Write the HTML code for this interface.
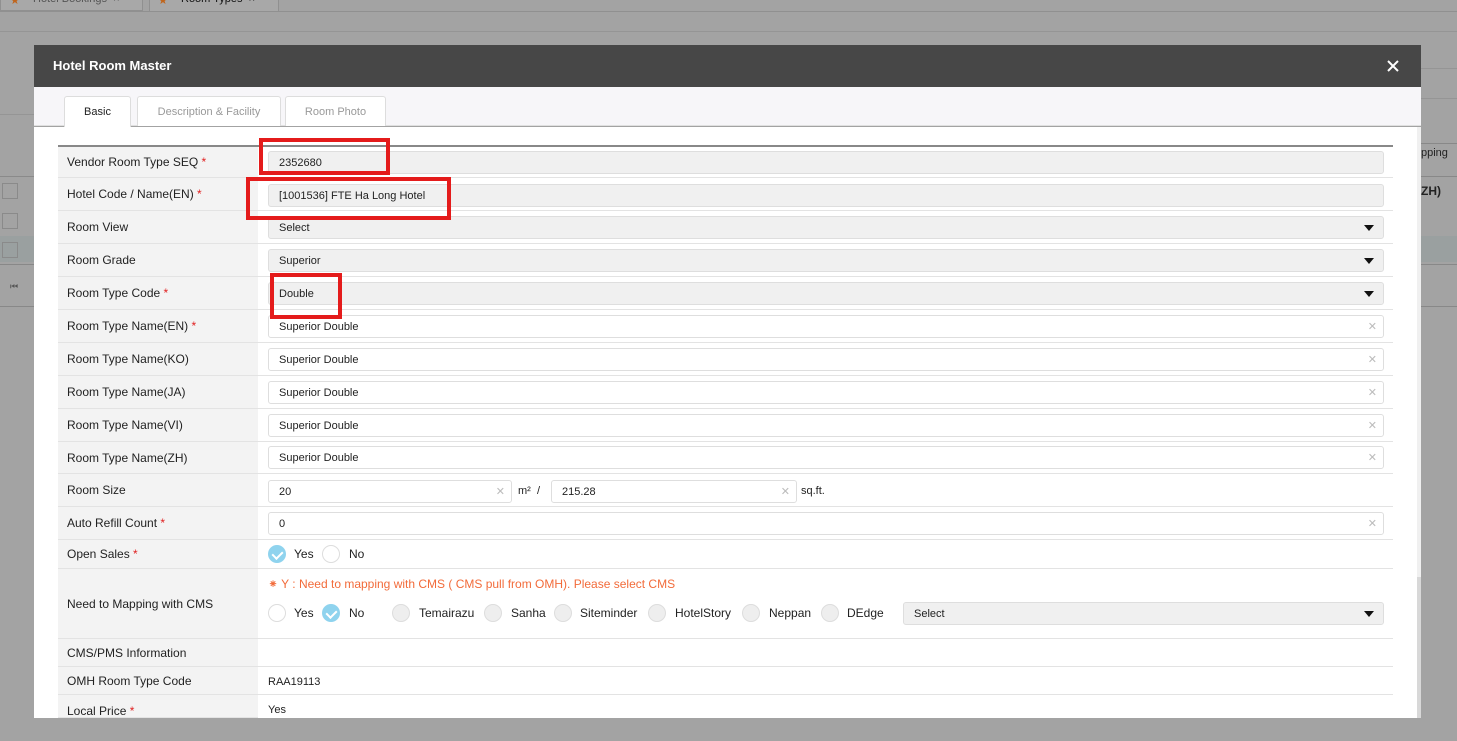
<!DOCTYPE html>
<html><head><meta charset="utf-8"><style>
*{box-sizing:border-box;margin:0;padding:0}
body{width:1457px;height:741px;overflow:hidden;background:#a3a3a3;font-family:"Liberation Sans",Arial,sans-serif;position:relative;font-size:12px;color:#222}
.a{position:absolute}
.lbl{position:absolute;left:58px;width:200px;background:#f3f3f3;border-bottom:1px solid #e3e3e3;font-size:12px;color:#222;padding-left:9px;display:flex;align-items:center}
.val{position:absolute;left:258px;width:1135px;border-bottom:1px solid #e3e3e3;background:#fff}
.inp{position:absolute;height:23px;border:1px solid #dedede;border-radius:3px;background:#fff;font-size:11px;padding-left:10px;line-height:23px;color:#222}
.ro{background:#f0f0f0}
.x{position:absolute;right:6px;top:0;color:#bbb;font-size:11px;line-height:22px}
.arr{position:absolute;right:9px;top:8px;width:0;height:0;border-left:5px solid transparent;border-right:5px solid transparent;border-top:6px solid #111}
.req{color:#e02020}
.rad{position:absolute;width:18px;height:18px;border-radius:50%;border:1px solid #ddd;background:#fff}
.rad.g{background:#eee}
.rad.c{background:#8fd3ee;border-color:#8fd3ee}
.rad.c:after{content:"";position:absolute;left:5px;top:3px;width:5px;height:8px;border:solid #fff;border-width:0 2px 2px 0;transform:rotate(45deg)}
.t{position:absolute;font-size:12px;color:#222}
.red{position:absolute;border:4px solid #e41b1b}
</style></head><body>
<div class="a" style="left:0;top:0;width:143px;height:11px;border:1px solid #909090;border-top:none;background:#a8a8a8"></div>
<div class="a" style="left:10px;top:-6px;font-size:11px;color:#c0651c">★</div>
<div class="a" style="left:33px;top:-7px;font-size:11px;color:#555">Hotel Bookings &nbsp;×</div>
<div class="a" style="left:149px;top:0;width:130px;height:12px;border:1px solid #909090;border-top:none;background:#a8a8a8"></div>
<div class="a" style="left:158px;top:-6px;font-size:11px;color:#c0651c">★</div>
<div class="a" style="left:181px;top:-7px;font-size:11px;color:#111">Room Types &nbsp;×</div>
<div class="a" style="left:0;top:11px;width:1457px;height:1px;background:#909090"></div>
<div class="a" style="left:0;top:31px;width:1457px;height:1px;background:#959595"></div>
<div class="a" style="left:0;top:114px;width:34px;height:1px;background:#959595"></div>
<div class="a" style="left:0;top:176px;width:34px;height:1px;background:#8a8a8a"></div>
<div class="a" style="left:0;top:236px;width:34px;height:26px;background:#9aa0a0"></div>
<div class="a" style="left:0;top:264px;width:34px;height:1px;background:#888"></div>
<div class="a" style="left:0;top:306px;width:34px;height:1px;background:#888"></div>
<div class="a" style="left:2px;top:183px;width:16px;height:16px;border:1px solid #8a8a8a"></div>
<div class="a" style="left:2px;top:213px;width:16px;height:16px;border:1px solid #8a8a8a"></div>
<div class="a" style="left:2px;top:242px;width:16px;height:16px;border:1px solid #8a8a8a"></div>
<div class="a" style="left:10px;top:281px;font-size:9px;color:#555">⏮</div>
<div class="a" style="left:1421px;top:68px;width:36px;height:1px;background:#959595"></div>
<div class="a" style="left:1421px;top:98px;width:36px;height:1px;background:#959595"></div>
<div class="a" style="left:1421px;top:143px;width:36px;height:1px;background:#888"></div>
<div class="a" style="left:1421px;top:147px;font-size:11px;color:#222">pping</div>
<div class="a" style="left:1421px;top:176px;width:36px;height:1px;background:#888"></div>
<div class="a" style="left:1421px;top:184px;font-size:12px;font-weight:bold;color:#222">ZH)</div>
<div class="a" style="left:1421px;top:236px;width:36px;height:26px;background:#9aa0a0"></div>
<div class="a" style="left:1421px;top:264px;width:36px;height:1px;background:#888"></div>
<div class="a" style="left:1421px;top:306px;width:36px;height:1px;background:#888"></div>

<div class="a" style="left:34px;top:45px;width:1387px;height:42px;background:#474747"></div>
<div class="a" style="left:53px;top:58px;color:#fff;font-weight:bold;font-size:13px">Hotel Room Master</div>
<svg class="a" style="left:1387px;top:60px" width="12" height="12" viewBox="0 0 12 12"><path d="M1 1L11 11M11 1L1 11" stroke="#fff" stroke-width="2"/></svg>
<div class="a" style="left:34px;top:87px;width:1387px;height:39px;background:#f7f6f9;border-bottom:1px solid #e0e0e0"></div>
<div class="a" style="left:64px;top:96px;width:67px;height:31px;background:#fff;border:1px solid #ddd;border-bottom:none;border-radius:3px 3px 0 0;text-align:center;line-height:30px;font-size:11px;color:#222">Basic</div>
<div class="a" style="left:137px;top:96px;width:144px;height:30px;background:#fff;border:1px solid #ddd;border-bottom:none;border-radius:3px 3px 0 0;text-align:center;line-height:30px;font-size:11px;color:#999">Description &amp; Facility</div>
<div class="a" style="left:285px;top:96px;width:101px;height:30px;background:#fff;border:1px solid #ddd;border-bottom:none;border-radius:3px 3px 0 0;text-align:center;line-height:30px;font-size:11px;color:#999">Room Photo</div>
<div class="a" style="left:34px;top:127px;width:1383px;height:591px;background:#fff"></div>
<div class="a" style="left:1417px;top:127px;width:4px;height:591px;background:#d8d8d8"></div>
<div class="a" style="left:1417px;top:127px;width:4px;height:450px;background:#f0f0f0"></div>
<div class="a" style="left:58px;top:145px;width:1335px;height:2px;background:#888"></div>

<div class="lbl" style="top:147px;height:31px">Vendor Room Type SEQ&nbsp;<span class="req">*</span></div>
<div class="val" style="top:147px;height:31px"><div class="inp ro" style="left:10px;top:4px;width:1116px">2352680</div></div>
<div class="lbl" style="top:178px;height:33px">Hotel Code / Name(EN)&nbsp;<span class="req">*</span></div>
<div class="val" style="top:178px;height:33px"><div class="inp ro" style="left:10px;top:6px;width:1116px">[1001536] FTE Ha Long Hotel</div></div>
<div class="lbl" style="top:211px;height:33px">Room View</div>
<div class="val" style="top:211px;height:33px"><div class="inp ro" style="left:10px;top:5px;width:1116px">Select<div class="arr"></div></div></div>
<div class="lbl" style="top:244px;height:33px">Room Grade</div>
<div class="val" style="top:244px;height:33px"><div class="inp ro" style="left:10px;top:5px;width:1116px">Superior<div class="arr"></div></div></div>
<div class="lbl" style="top:277px;height:33px">Room Type Code&nbsp;<span class="req">*</span></div>
<div class="val" style="top:277px;height:33px"><div class="inp ro" style="left:10px;top:5px;width:1116px">Double<div class="arr"></div></div></div>
<div class="lbl" style="top:310px;height:33px">Room Type Name(EN)&nbsp;<span class="req">*</span></div>
<div class="val" style="top:310px;height:33px"><div class="inp" style="left:10px;top:5px;width:1116px">Superior Double<span class="x">✕</span></div></div>
<div class="lbl" style="top:343px;height:33px">Room Type Name(KO)</div>
<div class="val" style="top:343px;height:33px"><div class="inp" style="left:10px;top:5px;width:1116px">Superior Double<span class="x">✕</span></div></div>
<div class="lbl" style="top:376px;height:33px">Room Type Name(JA)</div>
<div class="val" style="top:376px;height:33px"><div class="inp" style="left:10px;top:5px;width:1116px">Superior Double<span class="x">✕</span></div></div>
<div class="lbl" style="top:409px;height:33px">Room Type Name(VI)</div>
<div class="val" style="top:409px;height:33px"><div class="inp" style="left:10px;top:5px;width:1116px">Superior Double<span class="x">✕</span></div></div>
<div class="lbl" style="top:442px;height:32px">Room Type Name(ZH)</div>
<div class="val" style="top:442px;height:32px"><div class="inp" style="left:10px;top:4px;width:1116px">Superior Double<span class="x">✕</span></div></div>
<div class="lbl" style="top:474px;height:33px">Room Size</div>
<div class="val" style="top:474px;height:33px">
 <div class="inp" style="left:10px;top:6px;width:244px">20<span class="x">✕</span></div>
 <div class="t" style="left:260px;top:11px;font-size:11px">m² &nbsp;/</div>
 <div class="inp" style="left:293px;top:6px;width:246px">215.28<span class="x">✕</span></div>
 <div class="t" style="left:543px;top:11px;font-size:11px">sq.ft.</div>
</div>
<div class="lbl" style="top:507px;height:33px">Auto Refill Count&nbsp;<span class="req">*</span></div>
<div class="val" style="top:507px;height:33px"><div class="inp" style="left:10px;top:5px;width:1116px">0<span class="x">✕</span></div></div>
<div class="lbl" style="top:540px;height:29px">Open Sales&nbsp;<span class="req">*</span></div>
<div class="val" style="top:540px;height:29px">
 <div class="rad c" style="left:10px;top:5px"></div><div class="t" style="left:36px;top:7px">Yes</div>
 <div class="rad" style="left:64px;top:5px"></div><div class="t" style="left:91px;top:7px">No</div>
</div>
<div class="lbl" style="top:569px;height:70px">Need to Mapping with CMS</div>
<div class="val" style="top:569px;height:70px">
 <div class="t" style="left:10px;top:8px;color:#f26b3a">⁕ Y : Need to mapping with CMS ( CMS pull from OMH). Please select CMS</div>
 <div class="rad" style="left:10px;top:35px"></div><div class="t" style="left:36px;top:37px">Yes</div>
 <div class="rad c" style="left:64px;top:35px"></div><div class="t" style="left:91px;top:37px">No</div>
 <div class="rad g" style="left:134px;top:35px"></div><div class="t" style="left:161px;top:37px">Temairazu</div>
 <div class="rad g" style="left:226px;top:35px"></div><div class="t" style="left:253px;top:37px">Sanha</div>
 <div class="rad g" style="left:296px;top:35px"></div><div class="t" style="left:322px;top:37px">Siteminder</div>
 <div class="rad g" style="left:390px;top:35px"></div><div class="t" style="left:417px;top:37px">HotelStory</div>
 <div class="rad g" style="left:484px;top:35px"></div><div class="t" style="left:511px;top:37px">Neppan</div>
 <div class="rad g" style="left:563px;top:35px"></div><div class="t" style="left:589px;top:37px">DEdge</div>
 <div class="inp ro" style="left:645px;top:33px;width:481px">Select<div class="arr"></div></div>
</div>
<div class="lbl" style="top:639px;height:28px">CMS/PMS Information</div>
<div class="val" style="top:639px;height:28px"></div>
<div class="lbl" style="top:667px;height:28px">OMH Room Type Code</div>
<div class="val" style="top:667px;height:28px"><div class="t" style="left:10px;top:9px;font-size:11px">RAA19113</div></div>
<div class="lbl" style="top:695px;height:23px;align-items:flex-start;padding-top:9px">Local Price&nbsp;<span class="req">*</span></div>
<div class="val" style="top:695px;height:23px;border:none"><div class="t" style="left:10px;top:9px;font-size:11px">Yes</div></div>

<div class="red" style="left:259px;top:138px;width:131px;height:37px"></div>
<div class="red" style="left:246px;top:177px;width:205px;height:43px"></div>
<div class="red" style="left:270px;top:273px;width:72px;height:46px"></div>
<div class="a" style="left:0;top:718px;width:1457px;height:23px;background:#a3a3a3"></div>
</body></html>
